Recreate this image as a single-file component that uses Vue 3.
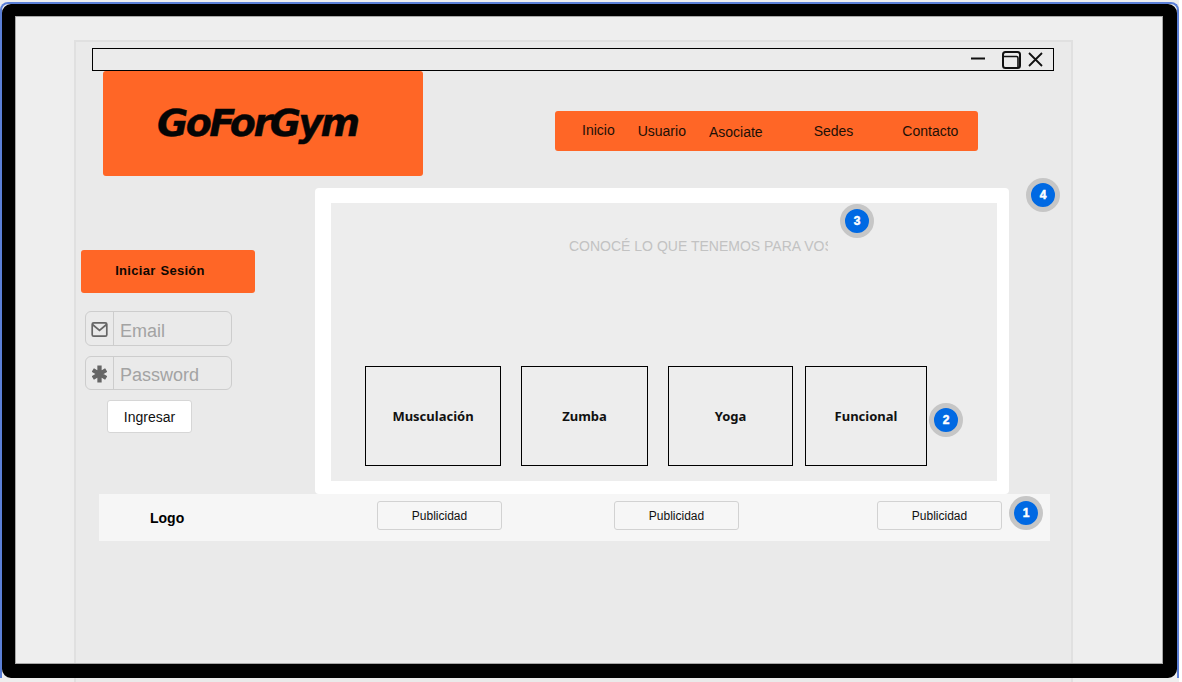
<template>
  <div class="screen">
    <div class="artboard">
      <div class="titlebar">
        <svg class="win-icon" width="82" height="21" viewBox="0 0 82 21" fill="none" stroke="#111" stroke-width="2">
          <path d="M1 9.5h14" />
          <rect x="33" y="3" width="17" height="16" rx="2.5" />
          <path d="M33 7.5h13.5a1.5 1.5 0 0 1 1.5 1.5v10" stroke-width="1.6" />
          <path d="M59 4l13 13M72 4L59 17" stroke-width="1.8" />
        </svg>
      </div>

      <header class="top">
        <div class="logo"><span>GoForGym</span></div>
        <nav class="menu">
          <a class="m-inicio">Inicio</a>
          <a class="m-usuario">Usuario</a>
          <a class="m-asociate">Asociate</a>
          <a class="m-sedes">Sedes</a>
          <a class="m-contacto">Contacto</a>
        </nav>
      </header>

      <div class="body-row">
        <aside class="login">
          <button class="login-title">Iniciar Sesión</button>
          <div class="field email">
            <span class="field-icon">
              <svg width="17" height="17" viewBox="0 0 17 17" fill="none" stroke="#666" stroke-width="1.7">
                <rect x="1.2" y="1.8" width="14.6" height="13.4" rx="1.5" />
                <path d="M1.5 3.5l7 6 7-6" />
              </svg>
            </span>
            <span class="placeholder">Email</span>
          </div>
          <div class="field password">
            <span class="field-icon">
              <svg width="15" height="18" viewBox="0 0 15 18" fill="none" stroke="#666" stroke-width="4.3">
                <path d="M7.5 0.5v17M0.8 5l13.4 8M14.2 5l-13.4 8" />
              </svg>
            </span>
            <span class="placeholder">Password</span>
          </div>
          <button class="submit">Ingresar</button>
        </aside>

        <main class="panel">
          <div class="panel-inner">
            <h2 class="headline">CONOCÉ LO QUE TENEMOS PARA VOS</h2>
            <div class="cards">
              <div v-for="c in cards" :key="c.name" class="card" :style="{ width: c.w + 'px' }">
                {{ c.name }}
              </div>
            </div>
          </div>
        </main>
      </div>

      <footer class="foot">
        <strong class="foot-logo">Logo</strong>
        <button class="ad ad-1">Publicidad</button>
        <button class="ad ad-2">Publicidad</button>
        <button class="ad ad-3">Publicidad</button>
      </footer>
    </div>

    <div class="edge"></div>
    <div class="frame"></div>

    <span v-for="b in badges" :key="b.n" class="badge" :style="{ left: b.x + 'px', top: b.y + 'px' }">{{ b.n }}</span>
  </div>
</template>

<script setup>
const cards = [
  { name: "Musculación", w: 136 },
  { name: "Zumba", w: 127 },
  { name: "Yoga", w: 125 },
  { name: "Funcional", w: 122 },
];

const badges = [
  { n: 1, x: 1009, y: 496 },
  { n: 2, x: 929, y: 403 },
  { n: 3, x: 840, y: 204 },
  { n: 4, x: 1026, y: 178 },
];
</script>

<style>
html,
body {
  margin: 0;
  background: #fff;
}
</style>

<style scoped>
.screen {
  position: relative;
  width: 1179px;
  height: 682px;
  padding-top: 40px;
  box-sizing: border-box;
  background: #eeeeee;
  overflow: hidden;
  font-family: "Liberation Sans", Arial, sans-serif;
}

.artboard {
  width: 999px;
  height: 660px;
  margin-left: 74px;
  box-sizing: border-box;
  border: 2px solid #e0e0e0;
  border-bottom: 0;
  padding-top: 6px;
  background: #eaeaea;
}

.titlebar {
  width: 962px;
  height: 23px;
  margin-left: 16px;
  box-sizing: border-box;
  border: 1px solid #000;
  display: flex;
  justify-content: flex-end;
  align-items: center;
  padding-right: 1px;
  background: #ebebeb;
}

.top {
  display: flex;
  align-items: flex-start;
  margin-left: 27px;
  height: 105px;
}

.logo {
  width: 320px;
  height: 105px;
  border-radius: 3px;
  background: #ff6626;
  display: flex;
  align-items: center;
  padding-left: 54px;
  box-sizing: border-box;
}

.logo span {
  font-family: "DejaVu Sans", sans-serif;
  font-size: 38px;
  font-weight: 700;
  font-style: italic;
  letter-spacing: -2.5px;
  -webkit-text-stroke: 0.4px #050505;
  color: #050505;
  padding-bottom: 2px;
}

.menu {
  width: 423px;
  height: 40px;
  margin: 40px 0 0 132px;
  border-radius: 3px;
  background: #ff6626;
  display: flex;
  align-items: flex-start;
  box-sizing: border-box;
  font-size: 14px;
  line-height: 16px;
  color: #1c1007;
}

.m-inicio { margin: 11px 0 0 27px; }
.m-usuario { margin: 12px 0 0 23px; }
.m-asociate { margin: 13px 0 0 23px; }
.m-sedes { margin: 12px 0 0 51px; }
.m-contacto { margin: 12px 0 0 49px; }

.body-row {
  display: flex;
  align-items: flex-start;
  margin-top: 12px;
}

.login {
  width: 174px;
  margin-left: 5px;
  padding-top: 62px;
  display: flex;
  flex-direction: column;
  align-items: flex-start;
}

.login-title {
  width: 174px;
  height: 43px;
  border: 0;
  border-radius: 3px;
  background: #ff6626;
  font-family: inherit;
  font-size: 13px;
  font-weight: 700;
  letter-spacing: 0.3px;
  word-spacing: 1px;
  color: #0c0803;
  padding: 0 16px 3px 0;
}

.field {
  width: 147px;
  margin-left: 4px;
  box-sizing: border-box;
  border: 1px solid #cdcdcd;
  border-radius: 6px;
  display: flex;
  align-items: stretch;
}

.email {
  height: 35px;
  margin-top: 18px;
}

.password {
  height: 34px;
  margin-top: 10px;
}

.field-icon {
  width: 28px;
  border-right: 1px solid #cdcdcd;
  display: flex;
  align-items: center;
  justify-content: center;
  padding-top: 1px;
  box-sizing: border-box;
}

.placeholder {
  margin-left: 6px;
  align-self: center;
  font-size: 18px;
  color: #a3a3a3;
}

.email .placeholder {
  padding-top: 5px;
}

.password .placeholder {
  padding-top: 4px;
}

.submit {
  width: 85px;
  height: 33px;
  margin: 10px 0 0 26px;
  border: 1px solid #d6d6d6;
  border-radius: 3px;
  background: #fff;
  font-family: inherit;
  font-size: 14px;
  color: #111;
  padding: 0;
}

.panel {
  width: 694px;
  height: 306px;
  margin-left: 60px;
  box-sizing: border-box;
  padding: 15px 12px 13px 16px;
  border-radius: 4px;
  background: #fff;
}

.panel-inner {
  height: 100%;
  background: #ededed;
  display: flex;
  flex-direction: column;
  box-sizing: border-box;
  padding: 33px 0 15px 34px;
}

.headline {
  width: 259px;
  margin: 0 0 0 204px;
  overflow: hidden;
  white-space: nowrap;
  font-size: 14px;
  line-height: 20px;
  font-weight: 400;
  color: #c2c2c2;
}

.cards {
  margin-top: auto;
  display: flex;
  gap: 20px;
}

.card {
  height: 100px;
  box-sizing: border-box;
  border: 1px solid #000;
  display: flex;
  align-items: center;
  justify-content: center;
  font-family: "Noto Sans", sans-serif;
  font-size: 13px;
  font-weight: 700;
  color: #111;
}

.card:last-child {
  margin-left: -8px;
}

.foot {
  width: 951px;
  height: 47px;
  margin-left: 23px;
  box-sizing: border-box;
  padding-top: 7px;
  background: #f6f6f6;
  display: grid;
  grid-template-columns: 278px 125px 112px 125px 138px 125px;
  align-items: start;
}

.foot-logo {
  padding: 9px 0 0 51px;
  font-size: 14px;
  color: #000;
}

.ad {
  height: 29px;
  box-sizing: border-box;
  border: 1px solid #d2d2d2;
  border-radius: 3px;
  background: #f6f6f6;
  font-family: inherit;
  font-size: 12px;
  color: #111;
  padding: 0;
}

.ad-1 { grid-column: 2; }
.ad-2 { grid-column: 4; }
.ad-3 { grid-column: 6; }

.edge {
  position: absolute;
  left: 0;
  top: 2px;
  width: 1179px;
  height: 676px;
  box-sizing: border-box;
  border: 2px solid #5b7fd6;
  border-bottom: 0;
  border-radius: 8px 8px 0 0;
  pointer-events: none;
}

.frame {
  position: absolute;
  left: 2px;
  top: 4px;
  width: 1175px;
  height: 674px;
  box-sizing: border-box;
  border: solid #000;
  border-width: 12px 14px 14px 13px;
  border-radius: 9px;
  box-shadow: inset 0 0 0 1px #a8a8a8;
  pointer-events: none;
}

.badge {
  position: absolute;
  width: 24px;
  height: 24px;
  border: 5px solid #c6c6c6;
  border-radius: 50%;
  background: #0069e3;
  color: #fff;
  font-family: "Liberation Sans", sans-serif;
  font-size: 12px;
  font-weight: 700;
  -webkit-text-stroke: 0.5px #fff;
  line-height: 24px;
  text-align: center;
}
</style>
